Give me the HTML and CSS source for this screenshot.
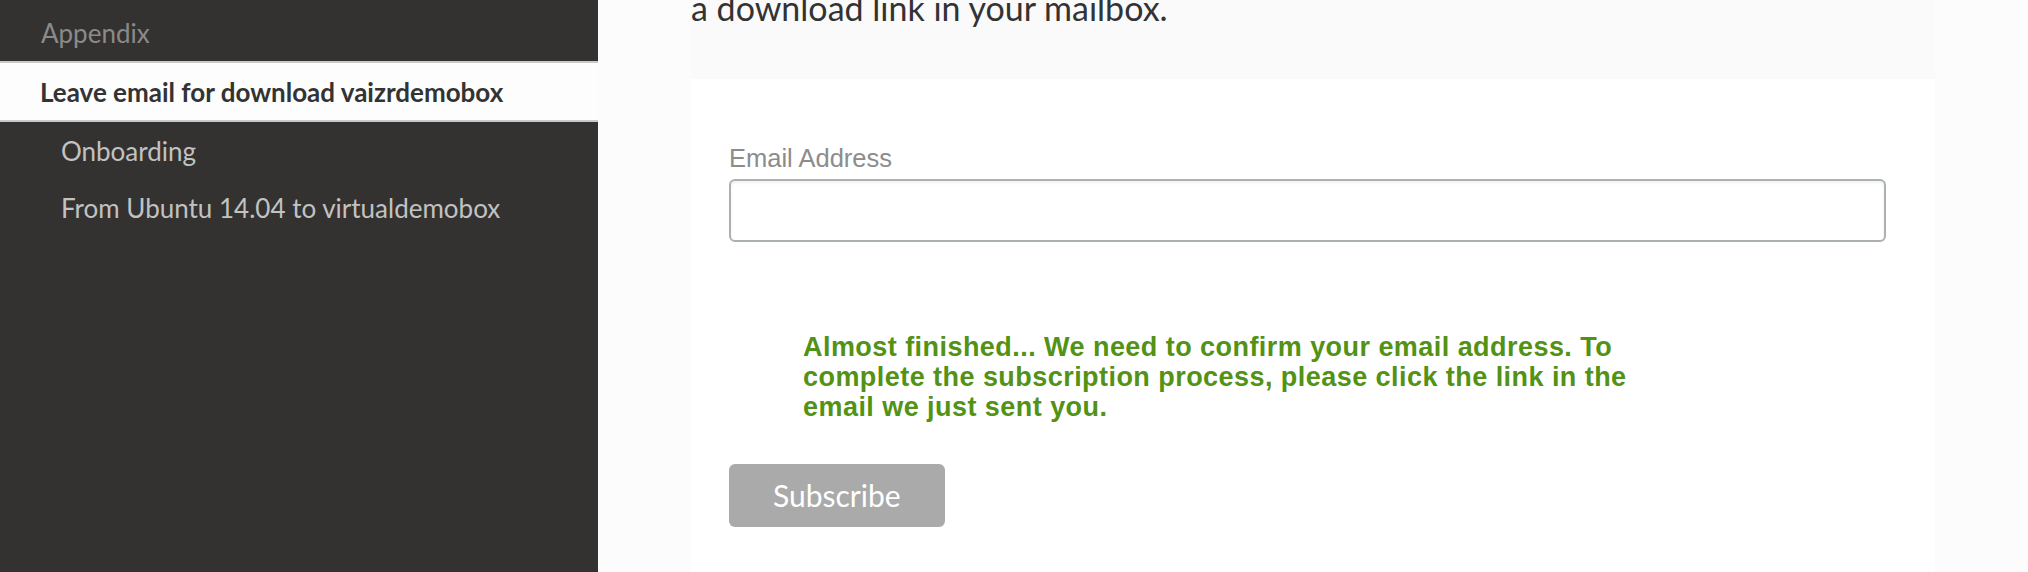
FILE: index.html
```html
<!DOCTYPE html>
<html>
<head>
<meta charset="utf-8">
<link rel="stylesheet" href="styles.css">
</head>
<body>
<div class="page">
  <nav class="sidebar">
    <ul class="nav">
      <li class="nav-item section">Appendix</li>
      <li class="nav-item active">Leave email for download vaizrdemobox</li>
      <li class="nav-item sub">Onboarding</li>
      <li class="nav-item sub">From Ubuntu 14.04 to virtualdemobox</li>
    </ul>
  </nav>
  <main class="main">
    <div class="column">
      <section class="intro">
        <p class="intro-text">a download link in your mailbox.</p>
      </section>
      <section class="card">
        <form class="signup">
          <label class="field-label" for="email">Email Address</label>
          <input class="field-input" id="email" type="email">
          <div class="success">Almost finished... We need to confirm your email address. To complete the subscription process, please click the link in the email we just sent you.</div>
          <button class="subscribe" type="button">Subscribe</button>
        </form>
      </section>
    </div>
  </main>
</div>
</body>
</html>
```

FILE: styles.css
```css
html, body {
  margin: 0;
  padding: 0;
  height: 572px;
  overflow: hidden;
}

body {
  font-family: Lato, "Liberation Sans", sans-serif;
  background: #fcfcfc;
}

.page {
  display: flex;
  height: 572px;
}

.sidebar {
  width: 598px;
  flex: none;
  background: #343230;
  padding-top: 4px;
  box-sizing: border-box;
}

.nav {
  list-style: none;
  margin: 0;
  padding: 0;
}

.nav-item {
  font-size: 26px;
  line-height: 29px;
  padding: 15px 0 13px 61px;
  color: #c2c2c2;
}

.nav-item.section {
  padding-left: 41px;
  color: #8a8a8a;
}

.nav-item.active {
  padding-left: 40px;
  background: #fdfdfd;
  color: #333333;
  font-weight: 700;
  border-top: 2px solid #c9c9c9;
  border-bottom: 2px solid #c9c9c9;
}

.main {
  flex: 1;
  display: flex;
  background: #fcfcfc;
}

.column {
  margin-left: 93px;
  width: 1244px;
  display: flex;
  flex-direction: column;
  background: #fafafa;
}

.intro {
  height: 79px;
  background: #fafafa;
  overflow: hidden;
}

.intro-text {
  margin: -12px 0 0 0;
  font-size: 34px;
  line-height: 40px;
  color: #333333;
}

.card {
  flex: 1;
  background: #ffffff;
  padding: 65px 49px 0 38px;
}

.signup {
  display: flex;
  flex-direction: column;
  align-items: flex-start;
}

.field-label {
  font-family: "Liberation Sans", Arial, sans-serif;
  font-size: 25.5px;
  line-height: 28px;
  color: #8c8c8c;
  margin-bottom: 7px;
}

.field-input {
  box-sizing: border-box;
  width: 100%;
  height: 63px;
  margin: 0;
  border: 2px solid #abb0b2;
  border-radius: 6px;
  background: #ffffff;
  box-shadow: inset 0 2px 3px rgba(0, 0, 0, 0.06);
}

.success {
  margin: 90px 0 0 74px;
  width: 850px;
  font-family: "Liberation Sans", Arial, sans-serif;
  font-weight: 700;
  font-size: 27px;
  letter-spacing: 0.45px;
  line-height: 30px;
  color: #529214;
}

.subscribe {
  margin-top: 42px;
  height: 63px;
  padding: 0 44px;
  border: none;
  border-radius: 6px;
  background: #aaaaaa;
  color: #ffffff;
  font-family: Lato, "Liberation Sans", sans-serif;
  font-size: 30px;
  line-height: 63px;
}
```
